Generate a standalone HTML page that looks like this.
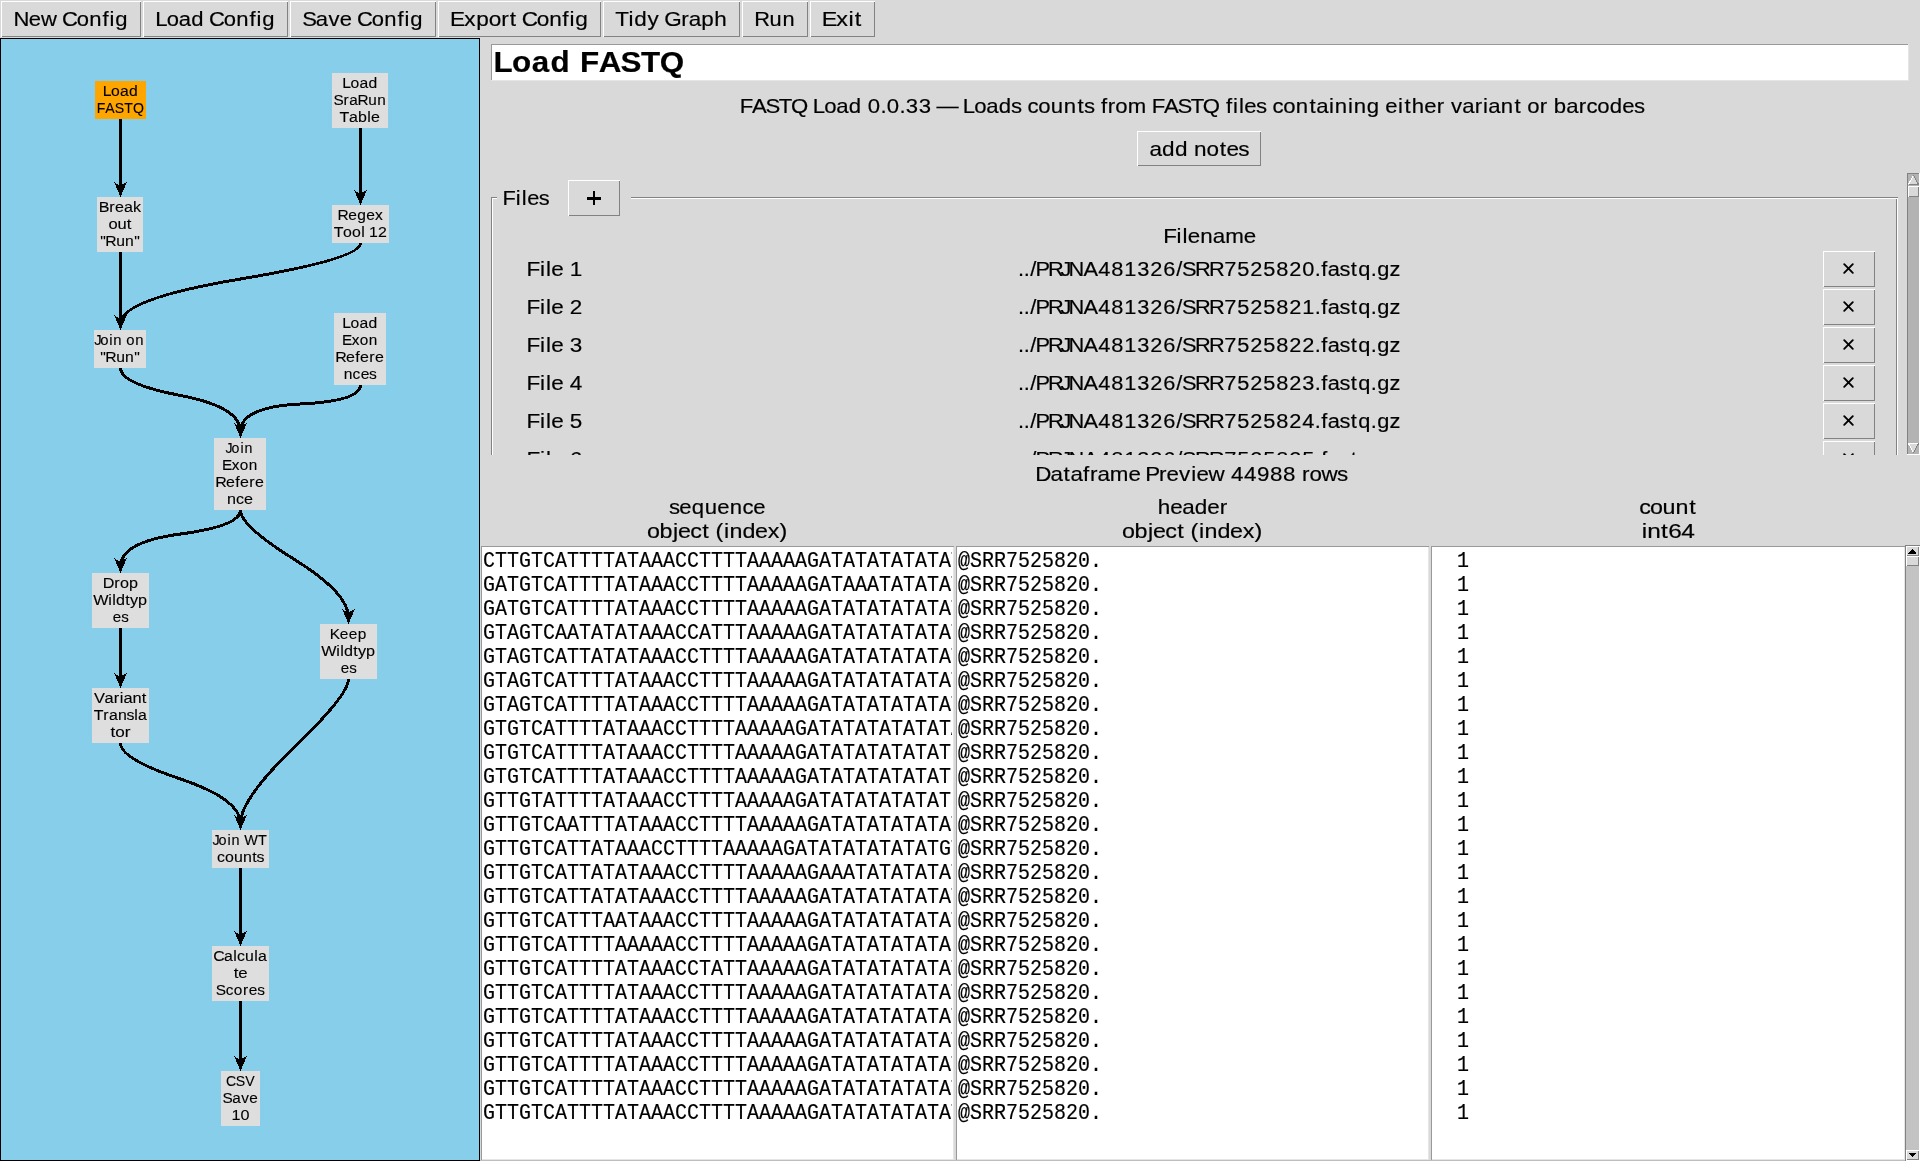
<!DOCTYPE html>
<html><head><meta charset="utf-8"><title>CountESS</title>
<style>html,body{margin:0;padding:0;background:#d9d9d9;width:1920px;height:1161px;overflow:hidden;position:relative}
svg{display:block;position:absolute;left:0;top:0}
#t{will-change:transform}
#t text{stroke:#000;stroke-width:0.18px}</style></head>
<body><svg width="1920" height="1161" viewBox="0 0 1920 1161" shape-rendering="crispEdges">
<defs><clipPath id="cf"><rect x="0" y="0" width="1920" height="455"/></clipPath><clipPath id="cs"><rect x="482" y="547" width="470" height="612"/></clipPath></defs><rect x="1" y="1" width="140" height="36" fill="#d9d9d9"/>
<rect x="1" y="1" width="140" height="1" fill="#ffffff"/>
<rect x="1" y="1" width="1" height="36" fill="#ffffff"/>
<rect x="2" y="36" width="139" height="1" fill="#828282"/>
<rect x="140" y="2" width="1" height="35" fill="#828282"/>
<rect x="143" y="1" width="145" height="36" fill="#d9d9d9"/>
<rect x="143" y="1" width="145" height="1" fill="#ffffff"/>
<rect x="143" y="1" width="1" height="36" fill="#ffffff"/>
<rect x="144" y="36" width="144" height="1" fill="#828282"/>
<rect x="287" y="2" width="1" height="35" fill="#828282"/>
<rect x="290" y="1" width="146" height="36" fill="#d9d9d9"/>
<rect x="290" y="1" width="146" height="1" fill="#ffffff"/>
<rect x="290" y="1" width="1" height="36" fill="#ffffff"/>
<rect x="291" y="36" width="145" height="1" fill="#828282"/>
<rect x="435" y="2" width="1" height="35" fill="#828282"/>
<rect x="438" y="1" width="163" height="36" fill="#d9d9d9"/>
<rect x="438" y="1" width="163" height="1" fill="#ffffff"/>
<rect x="438" y="1" width="1" height="36" fill="#ffffff"/>
<rect x="439" y="36" width="162" height="1" fill="#828282"/>
<rect x="600" y="2" width="1" height="35" fill="#828282"/>
<rect x="603" y="1" width="137" height="36" fill="#d9d9d9"/>
<rect x="603" y="1" width="137" height="1" fill="#ffffff"/>
<rect x="603" y="1" width="1" height="36" fill="#ffffff"/>
<rect x="604" y="36" width="136" height="1" fill="#828282"/>
<rect x="739" y="2" width="1" height="35" fill="#828282"/>
<rect x="742" y="1" width="66" height="36" fill="#d9d9d9"/>
<rect x="742" y="1" width="66" height="1" fill="#ffffff"/>
<rect x="742" y="1" width="1" height="36" fill="#ffffff"/>
<rect x="743" y="36" width="65" height="1" fill="#828282"/>
<rect x="807" y="2" width="1" height="35" fill="#828282"/>
<rect x="810" y="1" width="65" height="36" fill="#d9d9d9"/>
<rect x="810" y="1" width="65" height="1" fill="#ffffff"/>
<rect x="810" y="1" width="1" height="36" fill="#ffffff"/>
<rect x="811" y="36" width="64" height="1" fill="#828282"/>
<rect x="874" y="2" width="1" height="35" fill="#828282"/>
<rect x="0" y="38" width="480" height="1123" fill="#000"/>
<rect x="1" y="39" width="478" height="1121" fill="#87ceeb"/>
<path d="M120.5 119Q120.5 135 120.5 150.5Q120.5 166 120.5 190.5M360.5 128Q360.5 144 360.5 159.0Q360.5 174 360.5 198.5M120.5 252Q120.5 268 120.5 283.5Q120.5 299 120.5 323.5M360.5 243Q360.5 259 240.5 279.0Q120.5 299 120.5 323.5M120.5 368Q120.5 384 180.5 395.5Q240.5 407 240.5 431.5M360.5 385Q360.5 401 300.5 404.0Q240.5 407 240.5 431.5M240.5 510Q240.5 526 180.5 534.0Q120.5 542 120.5 566.5M240.5 510Q240.5 526 294.5 559.5Q348.5 593 348.5 617.5M120.5 628Q120.5 644 120.5 650.5Q120.5 657 120.5 681.5M120.5 743Q120.5 759 180.5 779.0Q240.5 799 240.5 823.5M348.5 679Q348.5 695 294.5 747.0Q240.5 799 240.5 823.5M240.5 868Q240.5 884 240.5 899.5Q240.5 915 240.5 939.5M240.5 1001Q240.5 1017 240.5 1028.5Q240.5 1040 240.5 1064.5" fill="none" stroke="#000" stroke-width="3"/>
<path d="M120.5 197L114.3 182.4L120.5 185.5L126.7 182.4ZM360.5 205L354.3 190.4L360.5 193.5L366.7 190.4ZM120.5 330L114.3 315.4L120.5 318.5L126.7 315.4ZM120.5 330L114.3 315.4L120.5 318.5L126.7 315.4ZM240.5 438L234.3 423.4L240.5 426.5L246.7 423.4ZM240.5 438L234.3 423.4L240.5 426.5L246.7 423.4ZM120.5 573L114.3 558.4L120.5 561.5L126.7 558.4ZM348.5 624L342.3 609.4L348.5 612.5L354.7 609.4ZM120.5 688L114.3 673.4L120.5 676.5L126.7 673.4ZM240.5 830L234.3 815.4L240.5 818.5L246.7 815.4ZM240.5 830L234.3 815.4L240.5 818.5L246.7 815.4ZM240.5 946L234.3 931.4L240.5 934.5L246.7 931.4ZM240.5 1071L234.3 1056.4L240.5 1059.5L246.7 1056.4Z" fill="#000"/>
<rect x="95" y="81" width="51" height="38" fill="#ffa500"/>
<rect x="332" y="73" width="56" height="55" fill="#dedede"/>
<rect x="97" y="197" width="46" height="55" fill="#dedede"/>
<rect x="332" y="205" width="57" height="38" fill="#dedede"/>
<rect x="94" y="330" width="52" height="38" fill="#dedede"/>
<rect x="334" y="313" width="52" height="72" fill="#dedede"/>
<rect x="214" y="438" width="52" height="72" fill="#dedede"/>
<rect x="92" y="573" width="57" height="55" fill="#dedede"/>
<rect x="320" y="624" width="57" height="55" fill="#dedede"/>
<rect x="92" y="688" width="57" height="55" fill="#dedede"/>
<rect x="212" y="830" width="57" height="38" fill="#dedede"/>
<rect x="212" y="946" width="57" height="55" fill="#dedede"/>
<rect x="221" y="1071" width="39" height="55" fill="#dedede"/>
<rect x="491" y="44" width="1418" height="37" fill="#ffffff"/>
<rect x="491" y="44" width="1418" height="1" fill="#999999"/>
<rect x="491" y="44" width="1" height="36" fill="#999999"/>
<rect x="491" y="80" width="1418" height="1" fill="#e5e5e5"/>
<rect x="1908" y="44" width="1" height="37" fill="#e5e5e5"/>
<rect x="1137" y="131" width="124" height="35" fill="#d9d9d9"/>
<rect x="1137" y="131" width="124" height="1" fill="#ffffff"/>
<rect x="1137" y="131" width="1" height="35" fill="#ffffff"/>
<rect x="1138" y="165" width="123" height="1" fill="#828282"/>
<rect x="1260" y="132" width="1" height="34" fill="#828282"/>
<g clip-path="url(#cf)">
<rect x="491" y="197" width="6" height="1" fill="#828282"/>
<rect x="491" y="198" width="6" height="1" fill="#ffffff"/>
<rect x="631" y="197" width="1267" height="1" fill="#828282"/>
<rect x="631" y="198" width="1267" height="1" fill="#ffffff"/>
<rect x="491" y="197" width="1" height="300" fill="#828282"/>
<rect x="492" y="198" width="1" height="300" fill="#ffffff"/>
<rect x="1896" y="199" width="1" height="300" fill="#828282"/>
<rect x="1897" y="198" width="1" height="300" fill="#ffffff"/>
<rect x="568" y="180" width="52" height="36" fill="#d9d9d9"/>
<rect x="568" y="180" width="52" height="1" fill="#ffffff"/>
<rect x="568" y="180" width="1" height="36" fill="#ffffff"/>
<rect x="569" y="215" width="51" height="1" fill="#828282"/>
<rect x="619" y="181" width="1" height="35" fill="#828282"/>
<rect x="587" y="197" width="14" height="2.6" fill="#000"/>
<rect x="592.7" y="191.2" width="2.6" height="14" fill="#000"/>
<rect x="1823" y="251" width="52" height="36" fill="#d9d9d9"/>
<rect x="1823" y="251" width="52" height="1" fill="#ffffff"/>
<rect x="1823" y="251" width="1" height="36" fill="#ffffff"/>
<rect x="1824" y="286" width="51" height="1" fill="#828282"/>
<rect x="1874" y="252" width="1" height="35" fill="#828282"/>
<path d="M1844.2 264.2L1852.8 272.8M1852.8 264.2L1844.2 272.8" stroke="#000" stroke-width="1.9" stroke-linecap="round" shape-rendering="geometricPrecision"/>
<rect x="1823" y="289" width="52" height="36" fill="#d9d9d9"/>
<rect x="1823" y="289" width="52" height="1" fill="#ffffff"/>
<rect x="1823" y="289" width="1" height="36" fill="#ffffff"/>
<rect x="1824" y="324" width="51" height="1" fill="#828282"/>
<rect x="1874" y="290" width="1" height="35" fill="#828282"/>
<path d="M1844.2 302.2L1852.8 310.8M1852.8 302.2L1844.2 310.8" stroke="#000" stroke-width="1.9" stroke-linecap="round" shape-rendering="geometricPrecision"/>
<rect x="1823" y="327" width="52" height="36" fill="#d9d9d9"/>
<rect x="1823" y="327" width="52" height="1" fill="#ffffff"/>
<rect x="1823" y="327" width="1" height="36" fill="#ffffff"/>
<rect x="1824" y="362" width="51" height="1" fill="#828282"/>
<rect x="1874" y="328" width="1" height="35" fill="#828282"/>
<path d="M1844.2 340.2L1852.8 348.8M1852.8 340.2L1844.2 348.8" stroke="#000" stroke-width="1.9" stroke-linecap="round" shape-rendering="geometricPrecision"/>
<rect x="1823" y="365" width="52" height="36" fill="#d9d9d9"/>
<rect x="1823" y="365" width="52" height="1" fill="#ffffff"/>
<rect x="1823" y="365" width="1" height="36" fill="#ffffff"/>
<rect x="1824" y="400" width="51" height="1" fill="#828282"/>
<rect x="1874" y="366" width="1" height="35" fill="#828282"/>
<path d="M1844.2 378.2L1852.8 386.8M1852.8 378.2L1844.2 386.8" stroke="#000" stroke-width="1.9" stroke-linecap="round" shape-rendering="geometricPrecision"/>
<rect x="1823" y="403" width="52" height="36" fill="#d9d9d9"/>
<rect x="1823" y="403" width="52" height="1" fill="#ffffff"/>
<rect x="1823" y="403" width="1" height="36" fill="#ffffff"/>
<rect x="1824" y="438" width="51" height="1" fill="#828282"/>
<rect x="1874" y="404" width="1" height="35" fill="#828282"/>
<path d="M1844.2 416.2L1852.8 424.8M1852.8 416.2L1844.2 424.8" stroke="#000" stroke-width="1.9" stroke-linecap="round" shape-rendering="geometricPrecision"/>
<rect x="1823" y="441" width="52" height="36" fill="#d9d9d9"/>
<rect x="1823" y="441" width="52" height="1" fill="#ffffff"/>
<rect x="1823" y="441" width="1" height="36" fill="#ffffff"/>
<rect x="1824" y="476" width="51" height="1" fill="#828282"/>
<rect x="1874" y="442" width="1" height="35" fill="#828282"/>
<path d="M1844.2 454.2L1852.8 462.8M1852.8 454.2L1844.2 462.8" stroke="#000" stroke-width="1.9" stroke-linecap="round" shape-rendering="geometricPrecision"/>
</g>
<rect x="1907" y="173" width="13" height="282" fill="#b3b3b3"/>
<rect x="1907" y="173" width="13" height="1" fill="#828282"/>
<rect x="1907" y="173" width="1" height="282" fill="#828282"/>
<rect x="1919" y="173" width="1" height="282" fill="#ffffff"/>
<rect x="1907" y="454" width="13" height="1" fill="#ffffff"/>
<path d="M1913.5 175L1908.5 184.5L1918.5 184.5Z" fill="#d9d9d9"/>
<path d="M1913.5 175L1908.5 184.5" stroke="#fff" stroke-width="1" fill="none"/><path d="M1913.5 175L1918.5 184.5L1908.5 184.5" stroke="#828282" stroke-width="1" fill="none"/>
<rect x="1908" y="186" width="11" height="11" fill="#d9d9d9"/>
<rect x="1908" y="186" width="11" height="1" fill="#ffffff"/>
<rect x="1908" y="186" width="1" height="11" fill="#ffffff"/>
<rect x="1909" y="196" width="10" height="1" fill="#828282"/>
<rect x="1918" y="187" width="1" height="10" fill="#828282"/>
<path d="M1913.5 453L1908.5 443.5L1918.5 443.5Z" fill="#d9d9d9"/>
<path d="M1908.5 443.5L1918.5 443.5M1908.5 443.5L1913.5 453" stroke="#fff" stroke-width="1" fill="none"/><path d="M1913.5 453L1918.5 443.5" stroke="#828282" stroke-width="1" fill="none"/>
<rect x="481" y="546" width="473" height="614" fill="#ffffff"/>
<rect x="481" y="546" width="473" height="1" fill="#999999"/>
<rect x="481" y="546" width="1" height="614" fill="#999999"/>
<rect x="953" y="547" width="1" height="613" fill="#e5e5e5"/>
<rect x="482" y="1159" width="472" height="1" fill="#e5e5e5"/>
<rect x="956" y="546" width="473" height="614" fill="#ffffff"/>
<rect x="956" y="546" width="473" height="1" fill="#999999"/>
<rect x="956" y="546" width="1" height="614" fill="#999999"/>
<rect x="1428" y="547" width="1" height="613" fill="#e5e5e5"/>
<rect x="957" y="1159" width="472" height="1" fill="#e5e5e5"/>
<rect x="1431" y="546" width="474" height="614" fill="#ffffff"/>
<rect x="1431" y="546" width="474" height="1" fill="#999999"/>
<rect x="1431" y="546" width="1" height="614" fill="#999999"/>
<rect x="1904" y="547" width="1" height="613" fill="#e5e5e5"/>
<rect x="1432" y="1159" width="473" height="1" fill="#e5e5e5"/>
<rect x="480" y="1160" width="1425" height="1" fill="#bebebe"/>
<rect x="1905" y="545" width="15" height="616" fill="#c3c3c3"/>
<rect x="1905" y="545" width="15" height="1" fill="#828282"/>
<rect x="1905" y="545" width="1" height="616" fill="#828282"/>
<rect x="1919" y="546" width="1" height="615" fill="#ffffff"/>
<rect x="1906" y="1160" width="14" height="1" fill="#ffffff"/>
<rect x="1906" y="546" width="13" height="10" fill="#d9d9d9"/>
<rect x="1906" y="546" width="13" height="1" fill="#ffffff"/>
<rect x="1906" y="546" width="1" height="10" fill="#ffffff"/>
<rect x="1907" y="555" width="12" height="1" fill="#828282"/>
<rect x="1918" y="547" width="1" height="9" fill="#828282"/>
<path d="M1912.5 548.5L1908.5 553.5L1916.5 553.5Z" fill="#000"/>
<rect x="1906" y="556" width="13" height="10" fill="#d9d9d9"/>
<rect x="1906" y="556" width="13" height="1" fill="#ffffff"/>
<rect x="1906" y="556" width="1" height="10" fill="#ffffff"/>
<rect x="1907" y="565" width="12" height="1" fill="#828282"/>
<rect x="1918" y="557" width="1" height="9" fill="#828282"/>
<rect x="1906" y="1150" width="13" height="10" fill="#d9d9d9"/>
<rect x="1906" y="1150" width="13" height="1" fill="#ffffff"/>
<rect x="1906" y="1150" width="1" height="10" fill="#ffffff"/>
<rect x="1907" y="1159" width="12" height="1" fill="#828282"/>
<rect x="1918" y="1151" width="1" height="9" fill="#828282"/>
<path d="M1912.5 1157.5L1908.5 1152.5L1916.5 1152.5Z" fill="#000"/>
</svg><svg id="t" width="1920" height="1161" viewBox="0 0 1920 1161">
<defs><clipPath id="tf"><rect x="0" y="0" width="1920" height="455"/></clipPath><clipPath id="ts"><rect x="482" y="547" width="470" height="612"/></clipPath></defs><text transform="translate(14.00 26) scale(1.0811 1)" x="-0.43 13.75 25.01 39.72 44.43 58.15 69.72 81.81 88.39 93.77" y="0" font-family='"Liberation Sans", sans-serif' font-weight="normal" font-size="20.4" fill="#000">New Config</text>
<text transform="translate(156.00 26) scale(1.0816 1)" x="-0.59 10.04 21.14 32.70 44.32 49.03 62.75 74.30 86.39 92.97 98.34" y="0" font-family='"Liberation Sans", sans-serif' font-weight="normal" font-size="20.4" fill="#000">Load Config</text>
<text transform="translate(303.00 26) scale(1.0797 1)" x="-0.78 11.92 23.61 34.15 45.33 50.06 63.79 75.37 87.47 94.05 99.45" y="0" font-family='"Liberation Sans", sans-serif' font-weight="normal" font-size="20.4" fill="#000">Save Config</text>
<text transform="translate(451.00 26) scale(1.1084 1)" x="-0.94 12.04 22.75 34.02 45.32 53.10 59.42 63.91 77.33 88.61 100.47 106.90 112.06" y="0" font-family='"Liberation Sans", sans-serif' font-weight="normal" font-size="20.4" fill="#000">Export Config</text>
<text transform="translate(616.00 26) scale(1.1000 1)" x="-0.78 11.37 16.60 28.54 38.99 43.89 59.33 66.15 77.51 89.33" y="0" font-family='"Liberation Sans", sans-serif' font-weight="normal" font-size="20.4" fill="#000">Tidy Graph</text>
<text transform="translate(755.00 26) scale(1.0688 1)" x="-0.82 13.51 25.67" y="0" font-family='"Liberation Sans", sans-serif' font-weight="normal" font-size="20.4" fill="#000">Run</text>
<text transform="translate(823.00 26) scale(1.1469 1)" x="-1.14 11.47 22.15 27.68" y="0" font-family='"Liberation Sans", sans-serif' font-weight="normal" font-size="20.4" fill="#000">Exit</text>
<text transform="translate(103.00 96) scale(1.1017 1)" x="-0.34 7.38 15.54 23.71" y="0" font-family='"Liberation Sans", sans-serif' font-weight="normal" font-size="14.28" fill="#000" style="stroke-width:0.12px">Load</text>
<text transform="translate(97.00 113) scale(0.9874 1)" x="-0.31 8.40 18.03 27.54 36.48" y="0" font-family='"Liberation Sans", sans-serif' font-weight="normal" font-size="14.28" fill="#000" style="stroke-width:0.12px">FASTQ</text>
<text transform="translate(342.50 88) scale(1.1017 1)" x="-0.34 7.38 15.54 23.71" y="0" font-family='"Liberation Sans", sans-serif' font-weight="normal" font-size="14.28" fill="#000" style="stroke-width:0.12px">Load</text>
<text transform="translate(334.00 105) scale(1.0740 1)" x="-0.57 8.80 14.19 21.85 31.88 40.26" y="0" font-family='"Liberation Sans", sans-serif' font-weight="normal" font-size="14.28" fill="#000" style="stroke-width:0.12px">SraRun</text>
<text transform="translate(340.00 122) scale(1.1198 1)" x="-0.34 8.08 16.12 24.31 27.73" y="0" font-family='"Liberation Sans", sans-serif' font-weight="normal" font-size="14.28" fill="#000" style="stroke-width:0.12px">Table</text>
<text transform="translate(99.00 212) scale(1.1259 1)" x="-0.32 9.17 14.24 22.23 30.18" y="0" font-family='"Liberation Sans", sans-serif' font-weight="normal" font-size="14.28" fill="#000" style="stroke-width:0.12px">Break</text>
<text transform="translate(108.50 229) scale(1.1584 1)" x="-0.09 7.68 15.71" y="0" font-family='"Liberation Sans", sans-serif' font-weight="normal" font-size="14.28" fill="#000" style="stroke-width:0.12px">out</text>
<text transform="translate(100.00 246) scale(1.1009 1)" x="0.19 4.84 14.65 22.83 31.07" y="0" font-family='"Liberation Sans", sans-serif' font-weight="normal" font-size="14.28" fill="#000" style="stroke-width:0.12px">&quot;Run&quot;</text>
<text transform="translate(338.00 220) scale(1.0902 1)" x="-0.57 9.33 17.59 25.84 34.04" y="0" font-family='"Liberation Sans", sans-serif' font-weight="normal" font-size="14.28" fill="#000" style="stroke-width:0.12px">Regex</text>
<text transform="translate(334.00 237) scale(1.1127 1)" x="-0.32 8.16 16.25 24.48 27.67 31.53 39.62" y="0" font-family='"Liberation Sans", sans-serif' font-weight="normal" font-size="14.28" fill="#000" style="stroke-width:0.12px">Tool 12</text>
<text transform="translate(96.00 345) scale(1.0423 1)" x="-1.65 4.18 12.81 16.66 24.88 29.13 37.76" y="0" font-family='"Liberation Sans", sans-serif' font-weight="normal" font-size="14.28" fill="#000" style="stroke-width:0.12px">Join on</text>
<text transform="translate(100.00 362) scale(1.1009 1)" x="0.19 4.84 14.65 22.83 31.07" y="0" font-family='"Liberation Sans", sans-serif' font-weight="normal" font-size="14.28" fill="#000" style="stroke-width:0.12px">&quot;Run&quot;</text>
<text transform="translate(342.50 328) scale(1.1017 1)" x="-0.34 7.38 15.54 23.71" y="0" font-family='"Liberation Sans", sans-serif' font-weight="normal" font-size="14.28" fill="#000" style="stroke-width:0.12px">Load</text>
<text transform="translate(342.50 345) scale(1.0753 1)" x="-0.58 8.52 16.02 24.39" y="0" font-family='"Liberation Sans", sans-serif' font-weight="normal" font-size="14.28" fill="#000" style="stroke-width:0.12px">Exon</text>
<text transform="translate(336.00 362) scale(1.1198 1)" x="-0.69 8.98 17.21 21.48 29.77 34.87" y="0" font-family='"Liberation Sans", sans-serif' font-weight="normal" font-size="14.28" fill="#000" style="stroke-width:0.12px">Refere</text>
<text transform="translate(343.50 379) scale(1.0940 1)" x="0.14 8.31 15.68 23.40" y="0" font-family='"Liberation Sans", sans-serif' font-weight="normal" font-size="14.28" fill="#000" style="stroke-width:0.12px">nces</text>
<text transform="translate(227.00 453) scale(0.9925 1)" x="-1.55 4.59 13.53 17.69" y="0" font-family='"Liberation Sans", sans-serif' font-weight="normal" font-size="14.28" fill="#000" style="stroke-width:0.12px">Join</text>
<text transform="translate(222.50 470) scale(1.0753 1)" x="-0.58 8.52 16.02 24.39" y="0" font-family='"Liberation Sans", sans-serif' font-weight="normal" font-size="14.28" fill="#000" style="stroke-width:0.12px">Exon</text>
<text transform="translate(216.00 487) scale(1.1198 1)" x="-0.69 8.98 17.21 21.48 29.77 34.87" y="0" font-family='"Liberation Sans", sans-serif' font-weight="normal" font-size="14.28" fill="#000" style="stroke-width:0.12px">Refere</text>
<text transform="translate(227.00 504) scale(1.1292 1)" x="0.01 7.94 15.07" y="0" font-family='"Liberation Sans", sans-serif' font-weight="normal" font-size="14.28" fill="#000" style="stroke-width:0.12px">nce</text>
<text transform="translate(103.00 588) scale(1.1308 1)" x="-0.29 10.00 15.04 23.00" y="0" font-family='"Liberation Sans", sans-serif' font-weight="normal" font-size="14.28" fill="#000" style="stroke-width:0.12px">Drop</text>
<text transform="translate(94.00 605) scale(1.1322 1)" x="-0.56 12.55 16.08 19.44 27.60 31.76 38.87" y="0" font-family='"Liberation Sans", sans-serif' font-weight="normal" font-size="14.28" fill="#000" style="stroke-width:0.12px">Wildtyp</text>
<text transform="translate(112.50 622) scale(1.0608 1)" x="0.27 8.21" y="0" font-family='"Liberation Sans", sans-serif' font-weight="normal" font-size="14.28" fill="#000" style="stroke-width:0.12px">es</text>
<text transform="translate(330.50 639) scale(1.0794 1)" x="-0.59 8.54 16.87 25.21" y="0" font-family='"Liberation Sans", sans-serif' font-weight="normal" font-size="14.28" fill="#000" style="stroke-width:0.12px">Keep</text>
<text transform="translate(322.00 656) scale(1.1322 1)" x="-0.56 12.55 16.08 19.44 27.60 31.76 38.87" y="0" font-family='"Liberation Sans", sans-serif' font-weight="normal" font-size="14.28" fill="#000" style="stroke-width:0.12px">Wildtyp</text>
<text transform="translate(340.50 673) scale(1.0608 1)" x="0.27 8.21" y="0" font-family='"Liberation Sans", sans-serif' font-weight="normal" font-size="14.28" fill="#000" style="stroke-width:0.12px">es</text>
<text transform="translate(94.50 703) scale(1.1492 1)" x="-0.41 8.65 16.77 21.91 25.18 33.01 41.09" y="0" font-family='"Liberation Sans", sans-serif' font-weight="normal" font-size="14.28" fill="#000" style="stroke-width:0.12px">Variant</text>
<text transform="translate(94.00 720) scale(1.1131 1)" x="-0.32 8.40 13.55 21.63 29.22 36.15 39.60" y="0" font-family='"Liberation Sans", sans-serif' font-weight="normal" font-size="14.28" fill="#000" style="stroke-width:0.12px">Transla</text>
<text transform="translate(110.50 737) scale(1.1999 1)" x="0.10 3.95 11.79" y="0" font-family='"Liberation Sans", sans-serif' font-weight="normal" font-size="14.28" fill="#000" style="stroke-width:0.12px">tor</text>
<text transform="translate(214.00 845) scale(1.0121 1)" x="-1.59 4.43 13.23 17.27 25.68 29.82 43.56" y="0" font-family='"Liberation Sans", sans-serif' font-weight="normal" font-size="14.28" fill="#000" style="stroke-width:0.12px">Join WT</text>
<text transform="translate(217.00 862) scale(1.1170 1)" x="0.01 7.22 15.28 23.33 31.59 35.37" y="0" font-family='"Liberation Sans", sans-serif' font-weight="normal" font-size="14.28" fill="#000" style="stroke-width:0.12px">counts</text>
<text transform="translate(214.00 961) scale(1.1130 1)" x="-0.66 9.06 17.28 20.69 27.92 36.15 39.61" y="0" font-family='"Liberation Sans", sans-serif' font-weight="normal" font-size="14.28" fill="#000" style="stroke-width:0.12px">Calcula</text>
<text transform="translate(233.50 978) scale(1.1753 1)" x="0.14 4.11" y="0" font-family='"Liberation Sans", sans-serif' font-weight="normal" font-size="14.28" fill="#000" style="stroke-width:0.12px">te</text>
<text transform="translate(216.50 995) scale(1.0800 1)" x="-0.60 8.47 15.94 24.47 29.83 37.63" y="0" font-family='"Liberation Sans", sans-serif' font-weight="normal" font-size="14.28" fill="#000" style="stroke-width:0.12px">Scores</text>
<text transform="translate(226.00 1086) scale(0.9878 1)" x="-0.09 9.92 19.53" y="0" font-family='"Liberation Sans", sans-serif' font-weight="normal" font-size="14.28" fill="#000" style="stroke-width:0.12px">CSV</text>
<text transform="translate(223.00 1103) scale(1.0753 1)" x="-0.58 8.58 16.89 24.39" y="0" font-family='"Liberation Sans", sans-serif' font-weight="normal" font-size="14.28" fill="#000" style="stroke-width:0.12px">Save</text>
<text transform="translate(231.50 1120) scale(1.1331 1)" x="0.00 7.94" y="0" font-family='"Liberation Sans", sans-serif' font-weight="normal" font-size="14.28" fill="#000" style="stroke-width:0.12px">10</text>
<text transform="translate(494.00 72) scale(1.0986 1)" x="-0.53 16.31 34.38 51.35 69.76 78.20 95.27 115.18 133.73 150.91" y="0" font-family='"Liberation Sans", sans-serif' font-weight="bold" font-size="28.56" fill="#000">Load FASTQ</text>
<text transform="translate(740.50 113) scale(1.0861 1)" x="-0.71 10.69 23.12 35.20 46.39 61.62 66.60 77.19 88.24 99.75 111.33 117.24 128.83 134.73 146.32 152.23 164.20 175.78 180.39 199.72 204.71 215.30 226.35 237.85 249.02 258.65 264.21 274.22 285.73 297.70 310.21 316.23 325.86 331.84 338.19 345.12 356.56 373.74 378.63 390.02 402.45 414.53 425.72 440.95 446.93 453.49 459.01 463.89 474.59 484.22 489.78 499.80 511.31 523.81 530.18 541.87 547.21 559.37 564.71 576.68 588.26 593.71 605.40 611.28 618.11 629.62 641.10 648.11 654.13 664.60 676.09 683.66 688.54 700.05 712.56 719.00 724.45 735.93 742.94 748.85 760.36 771.84 778.89 788.90 800.41 811.92 822.62" y="0" font-family='"Liberation Sans", sans-serif' font-weight="normal" font-size="20.4" fill="#000">FASTQ Load 0.0.33 — Loads counts from FASTQ files containing either variant or barcodes</text>
<text transform="translate(1149.80 156) scale(1.1047 1)" x="-0.24 11.07 22.84 34.28 40.04 51.35 63.25 69.46 79.99" y="0" font-family='"Liberation Sans", sans-serif' font-weight="normal" font-size="20.4" fill="#000">add notes</text>
<g clip-path="url(#tf)">
<text transform="translate(503.20 205) scale(1.0679 1)" x="-0.61 11.78 17.40 22.42 33.29" y="0" font-family='"Liberation Sans", sans-serif' font-weight="normal" font-size="20.4" fill="#000">Files</text>
<text transform="translate(1164.00 243) scale(1.0964 1)" x="-0.76 11.41 16.89 21.69 33.09 44.49 55.80 72.76" y="0" font-family='"Liberation Sans", sans-serif' font-weight="normal" font-size="20.4" fill="#000">Filename</text>
<text transform="translate(527.40 276) scale(1.1025 1)" x="-0.79 11.34 16.78 21.54 32.54 38.32" y="0" font-family='"Liberation Sans", sans-serif' font-weight="normal" font-size="20.4" fill="#000">File 1</text>
<text transform="translate(1017.90 276) scale(1.0693 1)" x="-0.03 5.58 11.66 16.58 28.17 39.79 47.34 61.46 75.22 87.38 99.53 111.69 123.85 136.00 148.20 153.58 165.64 178.73 193.05 205.21 217.36 229.52 241.68 253.84 265.99 277.72 283.79 289.84 300.70 311.38 318.36 330.09 336.13 347.46" y="0" font-family='"Liberation Sans", sans-serif' font-weight="normal" font-size="20.4" fill="#000">../PRJNA481326/SRR7525820.fastq.gz</text>
<text transform="translate(527.40 314) scale(1.1025 1)" x="-0.79 11.34 16.78 21.54 32.54 38.32" y="0" font-family='"Liberation Sans", sans-serif' font-weight="normal" font-size="20.4" fill="#000">File 2</text>
<text transform="translate(1017.90 314) scale(1.0693 1)" x="-0.03 5.58 11.66 16.58 28.17 39.79 47.34 61.46 75.22 87.38 99.53 111.69 123.85 136.00 148.20 153.58 165.64 178.73 193.05 205.21 217.36 229.52 241.68 253.84 265.99 277.72 283.79 289.84 300.70 311.38 318.36 330.09 336.13 347.46" y="0" font-family='"Liberation Sans", sans-serif' font-weight="normal" font-size="20.4" fill="#000">../PRJNA481326/SRR7525821.fastq.gz</text>
<text transform="translate(527.40 352) scale(1.1025 1)" x="-0.79 11.34 16.78 21.54 32.54 38.32" y="0" font-family='"Liberation Sans", sans-serif' font-weight="normal" font-size="20.4" fill="#000">File 3</text>
<text transform="translate(1017.90 352) scale(1.0693 1)" x="-0.03 5.58 11.66 16.58 28.17 39.79 47.34 61.46 75.22 87.38 99.53 111.69 123.85 136.00 148.20 153.58 165.64 178.73 193.05 205.21 217.36 229.52 241.68 253.84 265.99 277.72 283.79 289.84 300.70 311.38 318.36 330.09 336.13 347.46" y="0" font-family='"Liberation Sans", sans-serif' font-weight="normal" font-size="20.4" fill="#000">../PRJNA481326/SRR7525822.fastq.gz</text>
<text transform="translate(527.40 390) scale(1.1025 1)" x="-0.79 11.34 16.78 21.54 32.54 38.32" y="0" font-family='"Liberation Sans", sans-serif' font-weight="normal" font-size="20.4" fill="#000">File 4</text>
<text transform="translate(1017.90 390) scale(1.0693 1)" x="-0.03 5.58 11.66 16.58 28.17 39.79 47.34 61.46 75.22 87.38 99.53 111.69 123.85 136.00 148.20 153.58 165.64 178.73 193.05 205.21 217.36 229.52 241.68 253.84 265.99 277.72 283.79 289.84 300.70 311.38 318.36 330.09 336.13 347.46" y="0" font-family='"Liberation Sans", sans-serif' font-weight="normal" font-size="20.4" fill="#000">../PRJNA481326/SRR7525823.fastq.gz</text>
<text transform="translate(527.40 428) scale(1.1025 1)" x="-0.79 11.34 16.78 21.54 32.54 38.32" y="0" font-family='"Liberation Sans", sans-serif' font-weight="normal" font-size="20.4" fill="#000">File 5</text>
<text transform="translate(1017.90 428) scale(1.0693 1)" x="-0.03 5.58 11.66 16.58 28.17 39.79 47.34 61.46 75.22 87.38 99.53 111.69 123.85 136.00 148.20 153.58 165.64 178.73 193.05 205.21 217.36 229.52 241.68 253.84 265.99 277.72 283.79 289.84 300.70 311.38 318.36 330.09 336.13 347.46" y="0" font-family='"Liberation Sans", sans-serif' font-weight="normal" font-size="20.4" fill="#000">../PRJNA481326/SRR7525824.fastq.gz</text>
<text transform="translate(527.40 466) scale(1.1025 1)" x="-0.79 11.34 16.78 21.54 32.54 38.32" y="0" font-family='"Liberation Sans", sans-serif' font-weight="normal" font-size="20.4" fill="#000">File 6</text>
<text transform="translate(1017.90 466) scale(1.0693 1)" x="-0.03 5.58 11.66 16.58 28.17 39.79 47.34 61.46 75.22 87.38 99.53 111.69 123.85 136.00 148.20 153.58 165.64 178.73 193.05 205.21 217.36 229.52 241.68 253.84 265.99 277.72 283.79 289.84 300.70 311.38 318.36 330.09 336.13 347.46" y="0" font-family='"Liberation Sans", sans-serif' font-weight="normal" font-size="20.4" fill="#000">../PRJNA481326/SRR7525825.fastq.gz</text>
</g>
<text transform="translate(1035.70 481) scale(1.0962 1)" x="-0.52 13.48 25.45 31.73 43.23 49.51 56.36 67.67 84.64 95.69 99.93 112.45 119.30 130.82 141.86 146.67 157.75 172.31 178.14 190.00 201.86 213.72 225.57 237.08 242.90 249.75 260.83 274.95" y="0" font-family='"Liberation Sans", sans-serif' font-weight="normal" font-size="20.4" fill="#000">Dataframe Preview 44988 rows</text>
<text transform="translate(669.50 514) scale(1.0850 1)" x="-0.49 9.07 20.59 32.58 44.10 55.62 67.25 77.28" y="0" font-family='"Liberation Sans", sans-serif' font-weight="normal" font-size="20.4" fill="#000">sequence</text>
<text transform="translate(647.50 538) scale(1.1431 1)" x="-0.42 10.51 22.23 26.69 37.33 47.90 54.03 59.59 66.84 71.75 83.12 94.05 105.12 115.57" y="0" font-family='"Liberation Sans", sans-serif' font-weight="normal" font-size="20.4" fill="#000">object (index)</text>
<text transform="translate(1157.50 514) scale(1.1019 1)" x="0.23 11.57 22.46 33.81 45.15 56.50" y="0" font-family='"Liberation Sans", sans-serif' font-weight="normal" font-size="20.4" fill="#000">header</text>
<text transform="translate(1122.50 538) scale(1.1431 1)" x="-0.42 10.51 22.23 26.69 37.33 47.90 54.03 59.59 66.84 71.75 83.12 94.05 105.12 115.57" y="0" font-family='"Liberation Sans", sans-serif' font-weight="normal" font-size="20.4" fill="#000">object (index)</text>
<text transform="translate(1639.50 514) scale(1.1421 1)" x="-0.28 9.21 20.16 31.54 43.57" y="0" font-family='"Liberation Sans", sans-serif' font-weight="normal" font-size="20.4" fill="#000">count</text>
<text transform="translate(1641.50 538) scale(1.1980 1)" x="0.24 4.76 16.36 22.29 33.14" y="0" font-family='"Liberation Sans", sans-serif' font-weight="normal" font-size="20.4" fill="#000">int64</text>
<g clip-path="url(#ts)">
<text transform="translate(483.00 567) scale(0.8926 1)" x="0.00 13.44 26.89 40.33 53.78 67.22 80.66 94.11 107.55 121.00 134.44 147.88 161.33 174.77 188.21 201.66 215.10 228.55 241.99 255.43 268.88 282.32 295.77 309.21 322.65 336.10 349.54 362.99 376.43 389.87 403.32 416.76 430.20 443.65 457.09 470.54 483.98 497.42 510.87 524.31" y="0" font-family='"Liberation Mono", monospace' font-weight="normal" font-size="22.4" fill="#000">CTTGTCATTTTATAAACCTTTTAAAAAGATATATATATAT</text>
<text transform="translate(483.00 591) scale(0.8926 1)" x="0.00 13.44 26.89 40.33 53.78 67.22 80.66 94.11 107.55 121.00 134.44 147.88 161.33 174.77 188.21 201.66 215.10 228.55 241.99 255.43 268.88 282.32 295.77 309.21 322.65 336.10 349.54 362.99 376.43 389.87 403.32 416.76 430.20 443.65 457.09 470.54 483.98 497.42 510.87 524.31" y="0" font-family='"Liberation Mono", monospace' font-weight="normal" font-size="22.4" fill="#000">GATGTCATTTTATAAACCTTTTAAAAAGATAAATATATAT</text>
<text transform="translate(483.00 615) scale(0.8926 1)" x="0.00 13.44 26.89 40.33 53.78 67.22 80.66 94.11 107.55 121.00 134.44 147.88 161.33 174.77 188.21 201.66 215.10 228.55 241.99 255.43 268.88 282.32 295.77 309.21 322.65 336.10 349.54 362.99 376.43 389.87 403.32 416.76 430.20 443.65 457.09 470.54 483.98 497.42 510.87 524.31" y="0" font-family='"Liberation Mono", monospace' font-weight="normal" font-size="22.4" fill="#000">GATGTCATTTTATAAACCTTTTAAAAAGATATATATATAT</text>
<text transform="translate(483.00 639) scale(0.8926 1)" x="0.00 13.44 26.89 40.33 53.78 67.22 80.66 94.11 107.55 121.00 134.44 147.88 161.33 174.77 188.21 201.66 215.10 228.55 241.99 255.43 268.88 282.32 295.77 309.21 322.65 336.10 349.54 362.99 376.43 389.87 403.32 416.76 430.20 443.65 457.09 470.54 483.98 497.42 510.87 524.31" y="0" font-family='"Liberation Mono", monospace' font-weight="normal" font-size="22.4" fill="#000">GTAGTCAATATATAAACCATTTAAAAAGATATATATATAT</text>
<text transform="translate(483.00 663) scale(0.8926 1)" x="0.00 13.44 26.89 40.33 53.78 67.22 80.66 94.11 107.55 121.00 134.44 147.88 161.33 174.77 188.21 201.66 215.10 228.55 241.99 255.43 268.88 282.32 295.77 309.21 322.65 336.10 349.54 362.99 376.43 389.87 403.32 416.76 430.20 443.65 457.09 470.54 483.98 497.42 510.87 524.31" y="0" font-family='"Liberation Mono", monospace' font-weight="normal" font-size="22.4" fill="#000">GTAGTCATTATATAAACCTTTTAAAAAGATATATATATAT</text>
<text transform="translate(483.00 687) scale(0.8926 1)" x="0.00 13.44 26.89 40.33 53.78 67.22 80.66 94.11 107.55 121.00 134.44 147.88 161.33 174.77 188.21 201.66 215.10 228.55 241.99 255.43 268.88 282.32 295.77 309.21 322.65 336.10 349.54 362.99 376.43 389.87 403.32 416.76 430.20 443.65 457.09 470.54 483.98 497.42 510.87 524.31" y="0" font-family='"Liberation Mono", monospace' font-weight="normal" font-size="22.4" fill="#000">GTAGTCATTTTATAAACCTTTTAAAAAGATATATATATAT</text>
<text transform="translate(483.00 711) scale(0.8926 1)" x="0.00 13.44 26.89 40.33 53.78 67.22 80.66 94.11 107.55 121.00 134.44 147.88 161.33 174.77 188.21 201.66 215.10 228.55 241.99 255.43 268.88 282.32 295.77 309.21 322.65 336.10 349.54 362.99 376.43 389.87 403.32 416.76 430.20 443.65 457.09 470.54 483.98 497.42 510.87 524.31" y="0" font-family='"Liberation Mono", monospace' font-weight="normal" font-size="22.4" fill="#000">GTAGTCATTTTATAAACCTTTTAAAAAGATATATATATAT</text>
<text transform="translate(483.00 735) scale(0.8926 1)" x="0.00 13.44 26.89 40.33 53.78 67.22 80.66 94.11 107.55 121.00 134.44 147.88 161.33 174.77 188.21 201.66 215.10 228.55 241.99 255.43 268.88 282.32 295.77 309.21 322.65 336.10 349.54 362.99 376.43 389.87 403.32 416.76 430.20 443.65 457.09 470.54 483.98 497.42 510.87 524.31" y="0" font-family='"Liberation Mono", monospace' font-weight="normal" font-size="22.4" fill="#000">GTGTCATTTTATAAACCTTTTAAAAAGATATATATATATA</text>
<text transform="translate(483.00 759) scale(0.8926 1)" x="0.00 13.44 26.89 40.33 53.78 67.22 80.66 94.11 107.55 121.00 134.44 147.88 161.33 174.77 188.21 201.66 215.10 228.55 241.99 255.43 268.88 282.32 295.77 309.21 322.65 336.10 349.54 362.99 376.43 389.87 403.32 416.76 430.20 443.65 457.09 470.54 483.98 497.42 510.87" y="0" font-family='"Liberation Mono", monospace' font-weight="normal" font-size="22.4" fill="#000">GTGTCATTTTATAAACCTTTTAAAAAGATATATATATAT</text>
<text transform="translate(483.00 783) scale(0.8926 1)" x="0.00 13.44 26.89 40.33 53.78 67.22 80.66 94.11 107.55 121.00 134.44 147.88 161.33 174.77 188.21 201.66 215.10 228.55 241.99 255.43 268.88 282.32 295.77 309.21 322.65 336.10 349.54 362.99 376.43 389.87 403.32 416.76 430.20 443.65 457.09 470.54 483.98 497.42 510.87" y="0" font-family='"Liberation Mono", monospace' font-weight="normal" font-size="22.4" fill="#000">GTGTCATTTTATAAACCTTTTAAAAAGATATATATATAT</text>
<text transform="translate(483.00 807) scale(0.8926 1)" x="0.00 13.44 26.89 40.33 53.78 67.22 80.66 94.11 107.55 121.00 134.44 147.88 161.33 174.77 188.21 201.66 215.10 228.55 241.99 255.43 268.88 282.32 295.77 309.21 322.65 336.10 349.54 362.99 376.43 389.87 403.32 416.76 430.20 443.65 457.09 470.54 483.98 497.42 510.87" y="0" font-family='"Liberation Mono", monospace' font-weight="normal" font-size="22.4" fill="#000">GTTGTATTTTATAAACCTTTTAAAAAGATATATATATAT</text>
<text transform="translate(483.00 831) scale(0.8926 1)" x="0.00 13.44 26.89 40.33 53.78 67.22 80.66 94.11 107.55 121.00 134.44 147.88 161.33 174.77 188.21 201.66 215.10 228.55 241.99 255.43 268.88 282.32 295.77 309.21 322.65 336.10 349.54 362.99 376.43 389.87 403.32 416.76 430.20 443.65 457.09 470.54 483.98 497.42 510.87 524.31" y="0" font-family='"Liberation Mono", monospace' font-weight="normal" font-size="22.4" fill="#000">GTTGTCAATTTATAAACCTTTTAAAAAGATATATATATAT</text>
<text transform="translate(483.00 855) scale(0.8926 1)" x="0.00 13.44 26.89 40.33 53.78 67.22 80.66 94.11 107.55 121.00 134.44 147.88 161.33 174.77 188.21 201.66 215.10 228.55 241.99 255.43 268.88 282.32 295.77 309.21 322.65 336.10 349.54 362.99 376.43 389.87 403.32 416.76 430.20 443.65 457.09 470.54 483.98 497.42 510.87 524.31" y="0" font-family='"Liberation Mono", monospace' font-weight="normal" font-size="22.4" fill="#000">GTTGTCATTATAAACCTTTTAAAAAGATATATATATATGT</text>
<text transform="translate(483.00 879) scale(0.8926 1)" x="0.00 13.44 26.89 40.33 53.78 67.22 80.66 94.11 107.55 121.00 134.44 147.88 161.33 174.77 188.21 201.66 215.10 228.55 241.99 255.43 268.88 282.32 295.77 309.21 322.65 336.10 349.54 362.99 376.43 389.87 403.32 416.76 430.20 443.65 457.09 470.54 483.98 497.42 510.87 524.31" y="0" font-family='"Liberation Mono", monospace' font-weight="normal" font-size="22.4" fill="#000">GTTGTCATTATATAAACCTTTTAAAAAGAAATATATATAT</text>
<text transform="translate(483.00 903) scale(0.8926 1)" x="0.00 13.44 26.89 40.33 53.78 67.22 80.66 94.11 107.55 121.00 134.44 147.88 161.33 174.77 188.21 201.66 215.10 228.55 241.99 255.43 268.88 282.32 295.77 309.21 322.65 336.10 349.54 362.99 376.43 389.87 403.32 416.76 430.20 443.65 457.09 470.54 483.98 497.42 510.87 524.31" y="0" font-family='"Liberation Mono", monospace' font-weight="normal" font-size="22.4" fill="#000">GTTGTCATTATATAAACCTTTTAAAAAGATATATATATAT</text>
<text transform="translate(483.00 927) scale(0.8926 1)" x="0.00 13.44 26.89 40.33 53.78 67.22 80.66 94.11 107.55 121.00 134.44 147.88 161.33 174.77 188.21 201.66 215.10 228.55 241.99 255.43 268.88 282.32 295.77 309.21 322.65 336.10 349.54 362.99 376.43 389.87 403.32 416.76 430.20 443.65 457.09 470.54 483.98 497.42 510.87 524.31" y="0" font-family='"Liberation Mono", monospace' font-weight="normal" font-size="22.4" fill="#000">GTTGTCATTTAATAAACCTTTTAAAAAGATATATATATAT</text>
<text transform="translate(483.00 951) scale(0.8926 1)" x="0.00 13.44 26.89 40.33 53.78 67.22 80.66 94.11 107.55 121.00 134.44 147.88 161.33 174.77 188.21 201.66 215.10 228.55 241.99 255.43 268.88 282.32 295.77 309.21 322.65 336.10 349.54 362.99 376.43 389.87 403.32 416.76 430.20 443.65 457.09 470.54 483.98 497.42 510.87 524.31" y="0" font-family='"Liberation Mono", monospace' font-weight="normal" font-size="22.4" fill="#000">GTTGTCATTTTAAAAACCTTTTAAAAAGATATATATATA.</text>
<text transform="translate(483.00 975) scale(0.8926 1)" x="0.00 13.44 26.89 40.33 53.78 67.22 80.66 94.11 107.55 121.00 134.44 147.88 161.33 174.77 188.21 201.66 215.10 228.55 241.99 255.43 268.88 282.32 295.77 309.21 322.65 336.10 349.54 362.99 376.43 389.87 403.32 416.76 430.20 443.65 457.09 470.54 483.98 497.42 510.87 524.31" y="0" font-family='"Liberation Mono", monospace' font-weight="normal" font-size="22.4" fill="#000">GTTGTCATTTTATAAACCTATTAAAAAGATATATATATAT</text>
<text transform="translate(483.00 999) scale(0.8926 1)" x="0.00 13.44 26.89 40.33 53.78 67.22 80.66 94.11 107.55 121.00 134.44 147.88 161.33 174.77 188.21 201.66 215.10 228.55 241.99 255.43 268.88 282.32 295.77 309.21 322.65 336.10 349.54 362.99 376.43 389.87 403.32 416.76 430.20 443.65 457.09 470.54 483.98 497.42 510.87 524.31" y="0" font-family='"Liberation Mono", monospace' font-weight="normal" font-size="22.4" fill="#000">GTTGTCATTTTATAAACCTTTTAAAAAGATATATATATAT</text>
<text transform="translate(483.00 1023) scale(0.8926 1)" x="0.00 13.44 26.89 40.33 53.78 67.22 80.66 94.11 107.55 121.00 134.44 147.88 161.33 174.77 188.21 201.66 215.10 228.55 241.99 255.43 268.88 282.32 295.77 309.21 322.65 336.10 349.54 362.99 376.43 389.87 403.32 416.76 430.20 443.65 457.09 470.54 483.98 497.42 510.87 524.31" y="0" font-family='"Liberation Mono", monospace' font-weight="normal" font-size="22.4" fill="#000">GTTGTCATTTTATAAACCTTTTAAAAAGATATATATATAT</text>
<text transform="translate(483.00 1047) scale(0.8926 1)" x="0.00 13.44 26.89 40.33 53.78 67.22 80.66 94.11 107.55 121.00 134.44 147.88 161.33 174.77 188.21 201.66 215.10 228.55 241.99 255.43 268.88 282.32 295.77 309.21 322.65 336.10 349.54 362.99 376.43 389.87 403.32 416.76 430.20 443.65 457.09 470.54 483.98 497.42 510.87 524.31" y="0" font-family='"Liberation Mono", monospace' font-weight="normal" font-size="22.4" fill="#000">GTTGTCATTTTATAAACCTTTTAAAAAGATATATATATAT</text>
<text transform="translate(483.00 1071) scale(0.8926 1)" x="0.00 13.44 26.89 40.33 53.78 67.22 80.66 94.11 107.55 121.00 134.44 147.88 161.33 174.77 188.21 201.66 215.10 228.55 241.99 255.43 268.88 282.32 295.77 309.21 322.65 336.10 349.54 362.99 376.43 389.87 403.32 416.76 430.20 443.65 457.09 470.54 483.98 497.42 510.87 524.31" y="0" font-family='"Liberation Mono", monospace' font-weight="normal" font-size="22.4" fill="#000">GTTGTCATTTTATAAACCTTTTAAAAAGATATATATATAT</text>
<text transform="translate(483.00 1095) scale(0.8926 1)" x="0.00 13.44 26.89 40.33 53.78 67.22 80.66 94.11 107.55 121.00 134.44 147.88 161.33 174.77 188.21 201.66 215.10 228.55 241.99 255.43 268.88 282.32 295.77 309.21 322.65 336.10 349.54 362.99 376.43 389.87 403.32 416.76 430.20 443.65 457.09 470.54 483.98 497.42 510.87 524.31" y="0" font-family='"Liberation Mono", monospace' font-weight="normal" font-size="22.4" fill="#000">GTTGTCATTTTATAAACCTTTTAAAAAGATATATATATAT</text>
<text transform="translate(483.00 1119) scale(0.8926 1)" x="0.00 13.44 26.89 40.33 53.78 67.22 80.66 94.11 107.55 121.00 134.44 147.88 161.33 174.77 188.21 201.66 215.10 228.55 241.99 255.43 268.88 282.32 295.77 309.21 322.65 336.10 349.54 362.99 376.43 389.87 403.32 416.76 430.20 443.65 457.09 470.54 483.98 497.42 510.87 524.31" y="0" font-family='"Liberation Mono", monospace' font-weight="normal" font-size="22.4" fill="#000">GTTGTCATTTTATAAACCTTTTAAAAAGATATATATATAT</text>
</g>
<text transform="translate(958.00 567) scale(0.8926 1)" x="0.00 13.44 26.89 40.33 53.78 67.22 80.66 94.11 107.55 120.99 134.44 147.88" y="0" font-family='"Liberation Mono", monospace' font-weight="normal" font-size="22.4" fill="#000">@SRR7525820.</text>
<text transform="translate(1457.09 567) scale(0.8926 1)" x="0.00" y="0" font-family='"Liberation Mono", monospace' font-weight="normal" font-size="22.4" fill="#000">1</text>
<text transform="translate(958.00 591) scale(0.8926 1)" x="0.00 13.44 26.89 40.33 53.78 67.22 80.66 94.11 107.55 120.99 134.44 147.88" y="0" font-family='"Liberation Mono", monospace' font-weight="normal" font-size="22.4" fill="#000">@SRR7525820.</text>
<text transform="translate(1457.09 591) scale(0.8926 1)" x="0.00" y="0" font-family='"Liberation Mono", monospace' font-weight="normal" font-size="22.4" fill="#000">1</text>
<text transform="translate(958.00 615) scale(0.8926 1)" x="0.00 13.44 26.89 40.33 53.78 67.22 80.66 94.11 107.55 120.99 134.44 147.88" y="0" font-family='"Liberation Mono", monospace' font-weight="normal" font-size="22.4" fill="#000">@SRR7525820.</text>
<text transform="translate(1457.09 615) scale(0.8926 1)" x="0.00" y="0" font-family='"Liberation Mono", monospace' font-weight="normal" font-size="22.4" fill="#000">1</text>
<text transform="translate(958.00 639) scale(0.8926 1)" x="0.00 13.44 26.89 40.33 53.78 67.22 80.66 94.11 107.55 120.99 134.44 147.88" y="0" font-family='"Liberation Mono", monospace' font-weight="normal" font-size="22.4" fill="#000">@SRR7525820.</text>
<text transform="translate(1457.09 639) scale(0.8926 1)" x="0.00" y="0" font-family='"Liberation Mono", monospace' font-weight="normal" font-size="22.4" fill="#000">1</text>
<text transform="translate(958.00 663) scale(0.8926 1)" x="0.00 13.44 26.89 40.33 53.78 67.22 80.66 94.11 107.55 120.99 134.44 147.88" y="0" font-family='"Liberation Mono", monospace' font-weight="normal" font-size="22.4" fill="#000">@SRR7525820.</text>
<text transform="translate(1457.09 663) scale(0.8926 1)" x="0.00" y="0" font-family='"Liberation Mono", monospace' font-weight="normal" font-size="22.4" fill="#000">1</text>
<text transform="translate(958.00 687) scale(0.8926 1)" x="0.00 13.44 26.89 40.33 53.78 67.22 80.66 94.11 107.55 120.99 134.44 147.88" y="0" font-family='"Liberation Mono", monospace' font-weight="normal" font-size="22.4" fill="#000">@SRR7525820.</text>
<text transform="translate(1457.09 687) scale(0.8926 1)" x="0.00" y="0" font-family='"Liberation Mono", monospace' font-weight="normal" font-size="22.4" fill="#000">1</text>
<text transform="translate(958.00 711) scale(0.8926 1)" x="0.00 13.44 26.89 40.33 53.78 67.22 80.66 94.11 107.55 120.99 134.44 147.88" y="0" font-family='"Liberation Mono", monospace' font-weight="normal" font-size="22.4" fill="#000">@SRR7525820.</text>
<text transform="translate(1457.09 711) scale(0.8926 1)" x="0.00" y="0" font-family='"Liberation Mono", monospace' font-weight="normal" font-size="22.4" fill="#000">1</text>
<text transform="translate(958.00 735) scale(0.8926 1)" x="0.00 13.44 26.89 40.33 53.78 67.22 80.66 94.11 107.55 120.99 134.44 147.88" y="0" font-family='"Liberation Mono", monospace' font-weight="normal" font-size="22.4" fill="#000">@SRR7525820.</text>
<text transform="translate(1457.09 735) scale(0.8926 1)" x="0.00" y="0" font-family='"Liberation Mono", monospace' font-weight="normal" font-size="22.4" fill="#000">1</text>
<text transform="translate(958.00 759) scale(0.8926 1)" x="0.00 13.44 26.89 40.33 53.78 67.22 80.66 94.11 107.55 120.99 134.44 147.88" y="0" font-family='"Liberation Mono", monospace' font-weight="normal" font-size="22.4" fill="#000">@SRR7525820.</text>
<text transform="translate(1457.09 759) scale(0.8926 1)" x="0.00" y="0" font-family='"Liberation Mono", monospace' font-weight="normal" font-size="22.4" fill="#000">1</text>
<text transform="translate(958.00 783) scale(0.8926 1)" x="0.00 13.44 26.89 40.33 53.78 67.22 80.66 94.11 107.55 120.99 134.44 147.88" y="0" font-family='"Liberation Mono", monospace' font-weight="normal" font-size="22.4" fill="#000">@SRR7525820.</text>
<text transform="translate(1457.09 783) scale(0.8926 1)" x="0.00" y="0" font-family='"Liberation Mono", monospace' font-weight="normal" font-size="22.4" fill="#000">1</text>
<text transform="translate(958.00 807) scale(0.8926 1)" x="0.00 13.44 26.89 40.33 53.78 67.22 80.66 94.11 107.55 120.99 134.44 147.88" y="0" font-family='"Liberation Mono", monospace' font-weight="normal" font-size="22.4" fill="#000">@SRR7525820.</text>
<text transform="translate(1457.09 807) scale(0.8926 1)" x="0.00" y="0" font-family='"Liberation Mono", monospace' font-weight="normal" font-size="22.4" fill="#000">1</text>
<text transform="translate(958.00 831) scale(0.8926 1)" x="0.00 13.44 26.89 40.33 53.78 67.22 80.66 94.11 107.55 120.99 134.44 147.88" y="0" font-family='"Liberation Mono", monospace' font-weight="normal" font-size="22.4" fill="#000">@SRR7525820.</text>
<text transform="translate(1457.09 831) scale(0.8926 1)" x="0.00" y="0" font-family='"Liberation Mono", monospace' font-weight="normal" font-size="22.4" fill="#000">1</text>
<text transform="translate(958.00 855) scale(0.8926 1)" x="0.00 13.44 26.89 40.33 53.78 67.22 80.66 94.11 107.55 120.99 134.44 147.88" y="0" font-family='"Liberation Mono", monospace' font-weight="normal" font-size="22.4" fill="#000">@SRR7525820.</text>
<text transform="translate(1457.09 855) scale(0.8926 1)" x="0.00" y="0" font-family='"Liberation Mono", monospace' font-weight="normal" font-size="22.4" fill="#000">1</text>
<text transform="translate(958.00 879) scale(0.8926 1)" x="0.00 13.44 26.89 40.33 53.78 67.22 80.66 94.11 107.55 120.99 134.44 147.88" y="0" font-family='"Liberation Mono", monospace' font-weight="normal" font-size="22.4" fill="#000">@SRR7525820.</text>
<text transform="translate(1457.09 879) scale(0.8926 1)" x="0.00" y="0" font-family='"Liberation Mono", monospace' font-weight="normal" font-size="22.4" fill="#000">1</text>
<text transform="translate(958.00 903) scale(0.8926 1)" x="0.00 13.44 26.89 40.33 53.78 67.22 80.66 94.11 107.55 120.99 134.44 147.88" y="0" font-family='"Liberation Mono", monospace' font-weight="normal" font-size="22.4" fill="#000">@SRR7525820.</text>
<text transform="translate(1457.09 903) scale(0.8926 1)" x="0.00" y="0" font-family='"Liberation Mono", monospace' font-weight="normal" font-size="22.4" fill="#000">1</text>
<text transform="translate(958.00 927) scale(0.8926 1)" x="0.00 13.44 26.89 40.33 53.78 67.22 80.66 94.11 107.55 120.99 134.44 147.88" y="0" font-family='"Liberation Mono", monospace' font-weight="normal" font-size="22.4" fill="#000">@SRR7525820.</text>
<text transform="translate(1457.09 927) scale(0.8926 1)" x="0.00" y="0" font-family='"Liberation Mono", monospace' font-weight="normal" font-size="22.4" fill="#000">1</text>
<text transform="translate(958.00 951) scale(0.8926 1)" x="0.00 13.44 26.89 40.33 53.78 67.22 80.66 94.11 107.55 120.99 134.44 147.88" y="0" font-family='"Liberation Mono", monospace' font-weight="normal" font-size="22.4" fill="#000">@SRR7525820.</text>
<text transform="translate(1457.09 951) scale(0.8926 1)" x="0.00" y="0" font-family='"Liberation Mono", monospace' font-weight="normal" font-size="22.4" fill="#000">1</text>
<text transform="translate(958.00 975) scale(0.8926 1)" x="0.00 13.44 26.89 40.33 53.78 67.22 80.66 94.11 107.55 120.99 134.44 147.88" y="0" font-family='"Liberation Mono", monospace' font-weight="normal" font-size="22.4" fill="#000">@SRR7525820.</text>
<text transform="translate(1457.09 975) scale(0.8926 1)" x="0.00" y="0" font-family='"Liberation Mono", monospace' font-weight="normal" font-size="22.4" fill="#000">1</text>
<text transform="translate(958.00 999) scale(0.8926 1)" x="0.00 13.44 26.89 40.33 53.78 67.22 80.66 94.11 107.55 120.99 134.44 147.88" y="0" font-family='"Liberation Mono", monospace' font-weight="normal" font-size="22.4" fill="#000">@SRR7525820.</text>
<text transform="translate(1457.09 999) scale(0.8926 1)" x="0.00" y="0" font-family='"Liberation Mono", monospace' font-weight="normal" font-size="22.4" fill="#000">1</text>
<text transform="translate(958.00 1023) scale(0.8926 1)" x="0.00 13.44 26.89 40.33 53.78 67.22 80.66 94.11 107.55 120.99 134.44 147.88" y="0" font-family='"Liberation Mono", monospace' font-weight="normal" font-size="22.4" fill="#000">@SRR7525820.</text>
<text transform="translate(1457.09 1023) scale(0.8926 1)" x="0.00" y="0" font-family='"Liberation Mono", monospace' font-weight="normal" font-size="22.4" fill="#000">1</text>
<text transform="translate(958.00 1047) scale(0.8926 1)" x="0.00 13.44 26.89 40.33 53.78 67.22 80.66 94.11 107.55 120.99 134.44 147.88" y="0" font-family='"Liberation Mono", monospace' font-weight="normal" font-size="22.4" fill="#000">@SRR7525820.</text>
<text transform="translate(1457.09 1047) scale(0.8926 1)" x="0.00" y="0" font-family='"Liberation Mono", monospace' font-weight="normal" font-size="22.4" fill="#000">1</text>
<text transform="translate(958.00 1071) scale(0.8926 1)" x="0.00 13.44 26.89 40.33 53.78 67.22 80.66 94.11 107.55 120.99 134.44 147.88" y="0" font-family='"Liberation Mono", monospace' font-weight="normal" font-size="22.4" fill="#000">@SRR7525820.</text>
<text transform="translate(1457.09 1071) scale(0.8926 1)" x="0.00" y="0" font-family='"Liberation Mono", monospace' font-weight="normal" font-size="22.4" fill="#000">1</text>
<text transform="translate(958.00 1095) scale(0.8926 1)" x="0.00 13.44 26.89 40.33 53.78 67.22 80.66 94.11 107.55 120.99 134.44 147.88" y="0" font-family='"Liberation Mono", monospace' font-weight="normal" font-size="22.4" fill="#000">@SRR7525820.</text>
<text transform="translate(1457.09 1095) scale(0.8926 1)" x="0.00" y="0" font-family='"Liberation Mono", monospace' font-weight="normal" font-size="22.4" fill="#000">1</text>
<text transform="translate(958.00 1119) scale(0.8926 1)" x="0.00 13.44 26.89 40.33 53.78 67.22 80.66 94.11 107.55 120.99 134.44 147.88" y="0" font-family='"Liberation Mono", monospace' font-weight="normal" font-size="22.4" fill="#000">@SRR7525820.</text>
<text transform="translate(1457.09 1119) scale(0.8926 1)" x="0.00" y="0" font-family='"Liberation Mono", monospace' font-weight="normal" font-size="22.4" fill="#000">1</text>
</svg></body></html>
